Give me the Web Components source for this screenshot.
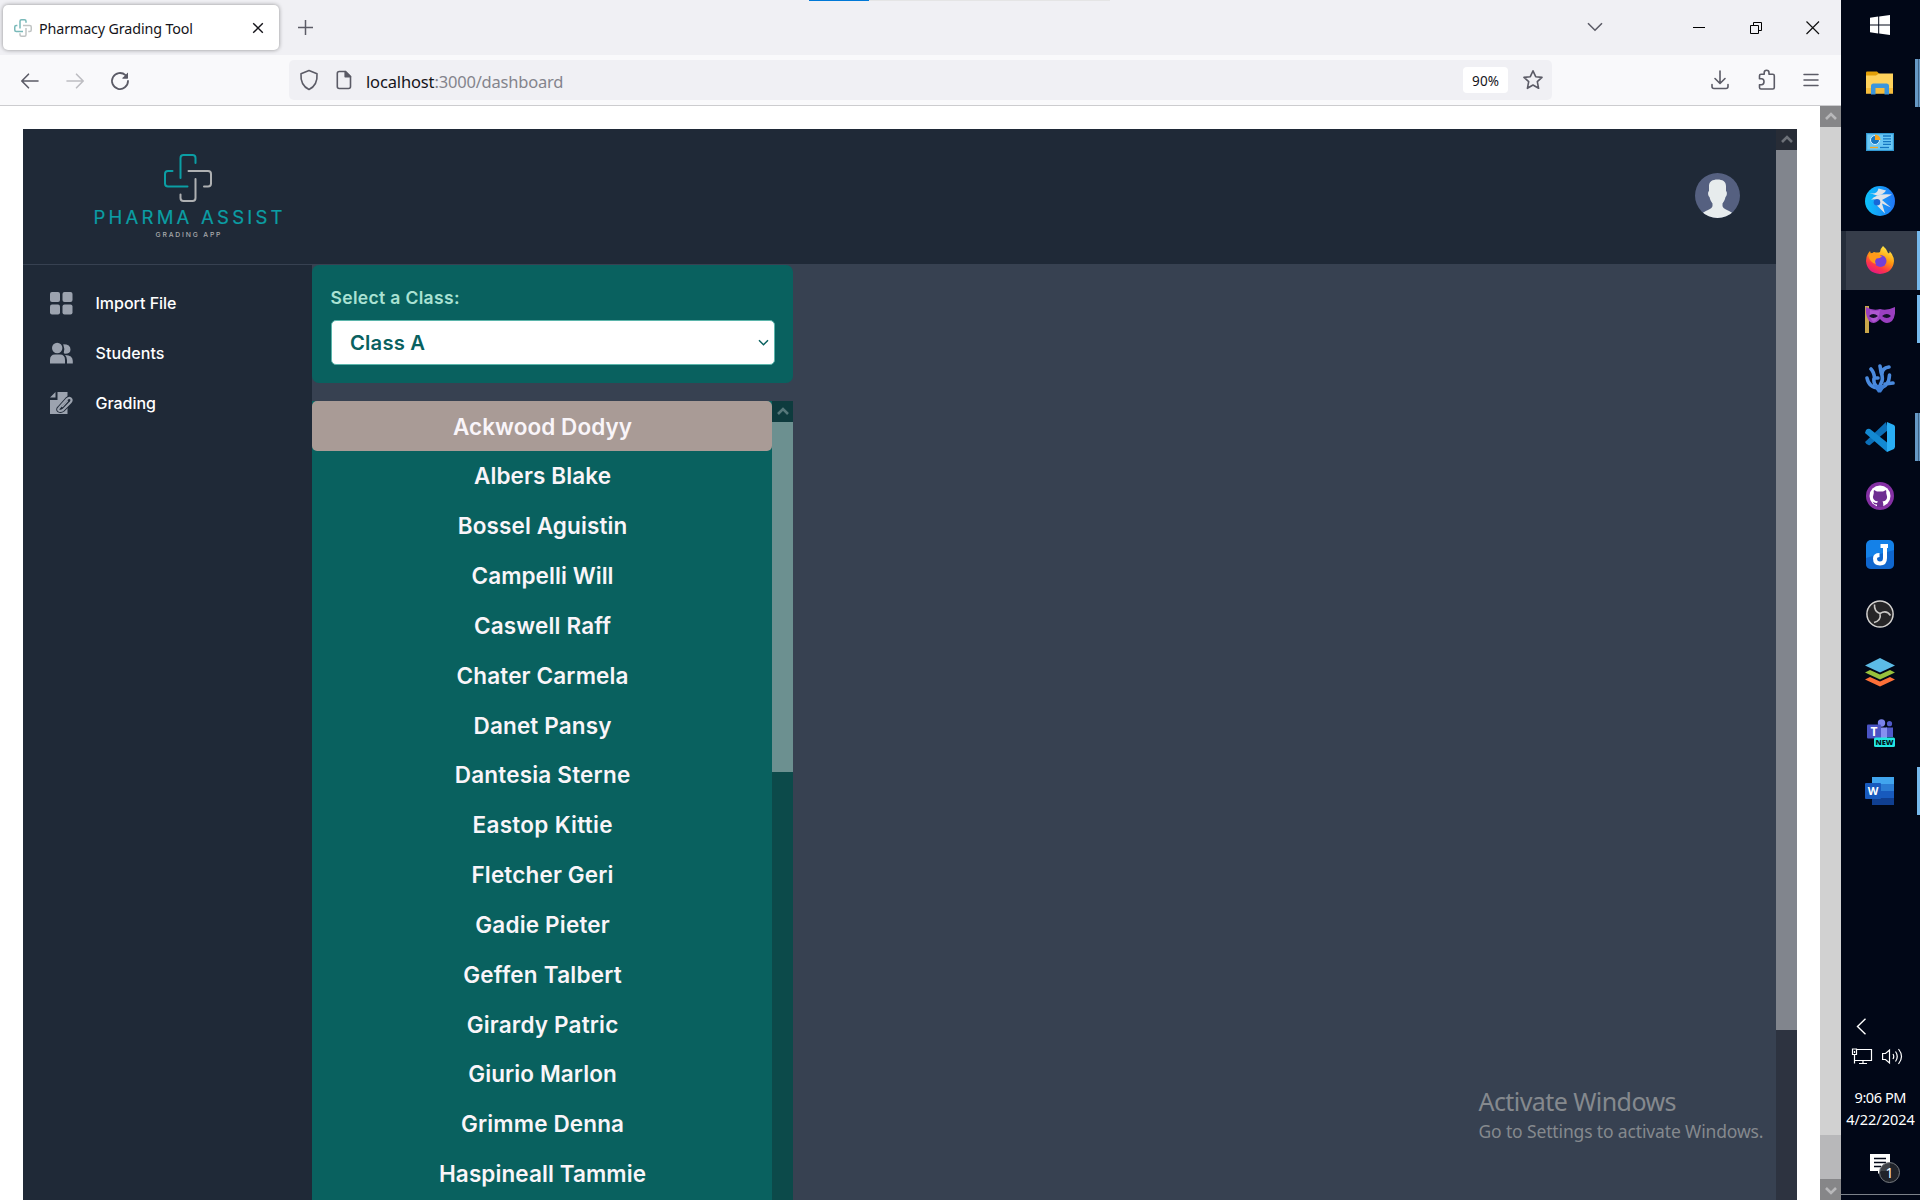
<!DOCTYPE html>
<html lang="en">
<head>
<meta charset="utf-8">
<title>Pharmacy Grading Tool</title>
<style>
html,body{margin:0;height:100%}
body{overflow:hidden;background:#fff;font-family:"Noto Sans","Open Sans",sans-serif}
</style>
</head>
<body>
<desk-screen></desk-screen>
<script>
const define = (name, html, init) => {
  const tpl = document.createElement('template');
  tpl.innerHTML = html;
  customElements.define(name, class extends HTMLElement {
    constructor() {
      super();
      this.attachShadow({ mode: 'open' }).appendChild(tpl.content.cloneNode(true));
    }
    connectedCallback() { if (init) init(this, this.shadowRoot); }
  });
};

/* A line of text whose tracking is tuned so that it spans w pixels. */
define('fit-text', `<style>
:host{display:block;white-space:nowrap}
span{display:inline-block;white-space:pre}
</style><span></span>`, (el, root) => {
  const s = root.querySelector('span');
  s.textContent = el.getAttribute('text');
  const w = parseFloat(el.getAttribute('w'));
  if (!w) return;
  const n = s.textContent.length;
  const natural = s.getBoundingClientRect().width;
  const ls = (w - natural) / (n - 1);
  s.style.letterSpacing = ls + 'px';
  s.style.marginRight = -ls + 'px';
});

/* ---------- Browser chrome ---------- */
define('browser-tabs', `<style>
:host{display:flex;height:55px;box-sizing:border-box;background:#f0f0f4;position:relative;align-items:center}
.load{position:absolute;left:809px;top:0;width:60px;height:1px;background:#0078d7}
.rest{position:absolute;left:869px;top:0;width:241px;height:1px;background:#e5e5e5}
.tab{width:276px;height:45px;margin-left:3px;background:#fff;border-radius:5px;box-shadow:0 0 4px rgba(0,0,0,.4);display:flex;align-items:center;box-sizing:border-box;padding:0 15px 0 11px}
.tab svg{flex:none}
fit-text{font-size:14.300px;color:#15141a;margin-left:7px;flex:1;line-height:20px;padding-top:2px}
.plus{margin-left:18px}
.grow{flex:1}
</style>
<div class="load"></div><div class="rest"></div>
<div class="tab">
<svg width="18" height="18" viewBox="0 0 48 48" fill="none" stroke-width="4"><path stroke="#79b9b9" d="M32 10V6Q32 2 28 2H20Q16 2 16 6V25M9 17H6Q2 17 2 21V29Q2 33 6 33H24"/><path stroke="#c0c4c4" d="M24 17H42Q46 17 46 21V29Q46 33 42 33H38M32 24V42Q32 46 28 46H20Q16 46 16 42V38"/></svg>
<fit-text text="Pharmacy Grading Tool" w="154"></fit-text>
<svg width="12" height="12" viewBox="0 0 12 12"><path d="M1.200 1.200 10.800 10.800M10.800 1.200 1.200 10.800" stroke="#15141a" stroke-width="1.400"/></svg>
</div>
<svg class="plus" width="17" height="17" viewBox="0 0 17 17"><path d="M8.500 1V16M1 8.500H16" stroke="#5b5b66" stroke-width="1.500"/></svg>
<span class="grow"></span>
<svg width="16" height="10" viewBox="0 0 16 10" style="margin:0 90px 1px 0"><path d="M1 1.200 8 8.200 15 1.200" fill="none" stroke="#5b5b66" stroke-width="1.600"/></svg>
<svg width="12" height="12" viewBox="0 0 12 12" style="margin:0 45px 0 0"><path d="M0 5.500H12" stroke="#000"/></svg>
<svg width="12" height="12" viewBox="0 0 12 12" style="margin:0 44px 0 0"><path d="M.5 3.500H8.500V11.500H.5ZM3.500 3V.5H11.500V8.500H9" fill="none" stroke="#000"/></svg>
<svg width="14" height="14" viewBox="0 0 14 14" style="margin:0 21px 0 0"><path d="M.5.5 13 13M13 .5.5 13" stroke="#111" stroke-width="1.200"/></svg>`);

define('browser-toolbar', `<style>
:host{display:flex;align-items:center;height:51px;box-sizing:border-box;background:#f9f9fb;border-bottom:1px solid #cccccf;padding-left:20px}
svg{flex:none;fill:none;stroke:#5b5b66;stroke-width:1.600;stroke-linecap:round;stroke-linejoin:round}
.url{width:1263px;height:40px;box-sizing:border-box;background:#f0f0f4;border-radius:5px;display:flex;align-items:center;margin-left:159px;padding:0 8px 0 10px}
fit-text{line-height:22px;font-size:16.500px;padding-top:3px}
.host{color:#15141a;margin-left:14px}
.path{color:#84848c;flex:1}
.zoom{width:45px;height:26px;border-radius:4px;background:#fff;display:flex;align-items:center;justify-content:center;color:#15141a;margin-right:14px}
.zoom fit-text{font-size:13.500px;padding-top:1px}
</style>
<svg width="20" height="18" viewBox="0 0 20 18" style="margin-top:1px"><path d="M18 9H2M8.500 2.200 1.800 9 8.500 15.800"/></svg>
<svg width="20" height="18" viewBox="0 0 20 18" style="margin:1px 0 0 26px;stroke:#bdbdc2"><path d="M1 9H17M10.500 2.200 17.200 9 10.500 15.800"/></svg>
<svg width="20" height="20" viewBox="0 0 20 20" style="margin:1px 0 0 24px;stroke-width:1.800"><path d="M15.500 4.200A8 8 0 1 0 18 10"/><path d="M18 1.500V7.500H12Z" fill="#5b5b66" stroke="none"/><path d="M17.500 2.800V7H13.200" stroke-width="1"/></svg>
<div class="url">
<svg width="20" height="22" viewBox="0 0 20 22"><path d="M10 1.500 18 4.700C18.500 11 17 17 10 20.500 3 17 1.500 11 2 4.700Z"/></svg>
<svg width="16" height="20" viewBox="0 0 16 20" style="margin-left:17px"><path d="M3.300 1.500H9.500L14.500 6.500V16.500Q14.500 18.500 12.500 18.500H3.300Q1.300 18.500 1.300 16.500V3.500Q1.300 1.500 3.300 1.500Z"/><path d="M9.200 1.500V6.800H14.500Z" fill="#5b5b66"/></svg>
<fit-text class="host" text="localhost" w="68.500"></fit-text>
<fit-text class="path" text=":3000/dashboard" w="129"></fit-text>
<div class="zoom"><fit-text text="90%" w="27"></fit-text></div>
<svg width="22" height="22" viewBox="0 0 22 22"><path d="M11 1.800 13.700 7.700 20 8.400 15.300 12.700 16.600 19.300 11 16 5.400 19.300 6.700 12.700 2 8.400 8.300 7.700Z"/></svg>
</div>
<svg width="18" height="20" viewBox="0 0 18 20" style="margin-left:159px"><path d="M9 1V13M4 8.500 9 13.500 14 8.500M1 14.500V16.500Q1 18.500 3 18.500H15Q17 18.500 17 16.500V14.500"/></svg>
<svg width="20" height="22" viewBox="0 0 20 22" style="margin-left:28px"><path d="M2.500 9V6.700Q2.500 5.200 4 5.200H7.200V3.800Q7.200 1.300 9.600 1.300 12 1.300 12 3.800V5.200H15.800Q17.300 5.200 17.300 6.700V18.500Q17.300 20 15.800 20H4Q2.500 20 2.500 18.500V15.800H4.500Q7 15.500 7 12.800 7 10 4.500 9.800H2.500Z"/></svg>
<svg width="16" height="14" viewBox="0 0 16 14" style="margin-left:26px;stroke-width:1.500"><path d="M1 1.500H15M1 7H15M1 12.500H15"/></svg>`);

/* Vertical overlay scrollbar. Sizes and colours come in as custom properties. */
define('scroll-bar', `<style>
:host{display:flex;flex-direction:column;width:21px;flex:none;background:var(--track)}
.b{height:21px;flex:none;background:var(--btn);display:flex;align-items:center;justify-content:center}
.b svg{fill:none;stroke:var(--arrow);stroke-width:2.600}
.thumb{height:var(--thumb-h);flex:none;background:var(--thumb)}
.grow{flex:1}
.down{display:none}
:host([down]) .down{display:flex}
</style>
<div class="b"><svg width="12" height="10" viewBox="0 0 12 10"><path d="M1 7 6 2 11 7"/></svg></div>
<div class="thumb"></div><div class="grow"></div>
<div class="b down"><svg width="12" height="10" viewBox="0 0 12 10"><path d="M1 3 6 8 11 3"/></svg></div>`);

/* ---------- Application ---------- */
define('app-logo', `<style>
:host{display:flex;flex-direction:column;align-items:center;width:190px}
.n{font:400 18.500px/18px Inter,sans-serif;color:#0b9ea4;margin-top:6px;-webkit-text-stroke:.2px #0b9ea4}
.s{font:500 6.800px/8px Inter,sans-serif;color:#a9abad;margin-top:5px}
</style>
<svg width="48" height="48" viewBox="0 0 48 48" fill="none" stroke-width="2" stroke-linecap="round"><path stroke="#0b9ea4" d="M31.500 9V4Q31.500 1 28.500 1H19.500Q16.500 1 16.500 4V24M8.500 17H4Q1 17 1 20V29.500Q1 32.500 4 32.500H23.500"/><path stroke="#aeb0b2" d="M24.500 17H44Q47 17 47 20V29.500Q47 32.500 44 32.500H40M31.500 25V44Q31.500 47 28.500 47H19.500Q16.500 47 16.500 44V40.500"/></svg>
<fit-text class="n" text="PHARMA ASSIST" w="189"></fit-text>
<fit-text class="s" text="GRADING APP" w="65"></fit-text>`);

define('user-avatar', `<style>:host{display:block;width:45px;height:45px}svg{display:block}</style>
<svg width="45" height="45" viewBox="0 0 45 45"><defs><clipPath id="c"><circle cx="22.500" cy="22.500" r="22.500"/></clipPath></defs><g clip-path="url(#c)"><path fill="#556080" d="M0 0H45V45H0Z"/><path fill="#e7eced" d="M22.500 6.500C27.500 6.500 31 8.500 31 13V18C32.500 19 32 23 30.500 24 29.800 27.500 28.500 29 27.500 30.500V33C28 36 33 37 37.500 40V45H7.500V40C12 37 17 36 17.500 33V30.500C16.500 29 15.200 27.500 14.500 24 13 23 12.500 19 14 18V13C14 8.500 17.500 6.500 22.500 6.500Z"/></g></svg>`);

define('app-header', `<style>
:host{display:flex;height:136px;box-sizing:border-box;border-bottom:1px solid #374151;background:#1f2937;align-items:flex-start;justify-content:space-between;padding:25px 36px 0 70px}
user-avatar{margin-top:19px}
</style><app-logo></app-logo><user-avatar></user-avatar>`);

define('nav-item', `<style>
:host{display:flex;align-items:center;height:50px;color:#fff;font:500 16px/24px Inter,sans-serif}
.i{width:24px;height:24px;margin-right:22.500px;display:flex}
</style><span class="i"><slot name="icon"></slot></span><slot></slot>`);

define('app-sidebar', `<style>
:host{display:flex;flex-direction:column;width:289px;flex:none;box-sizing:border-box;background:#1f2937;padding:13px 26px}
svg{fill:#9ca3af}
</style>
<nav-item><svg slot="icon" width="24" height="24" viewBox="0 0 24 24"><rect x="1" y="1" width="10" height="10" rx="2"/><rect x="13.500" y="1" width="10" height="10" rx="2"/><rect x="1" y="13.500" width="10" height="10" rx="2"/><rect x="13.500" y="13.500" width="10" height="10" rx="2"/></svg><fit-text text="Import File" w="81"></fit-text></nav-item>
<nav-item><svg slot="icon" width="24" height="24" viewBox="0 0 24 24"><circle cx="8.200" cy="7" r="5.200"/><path d="M1 22.500V19Q1 13.500 6 13.500H11Q16 13.500 16 19V22.500ZM14.200 3.300Q21.500 3.300 21.500 8.500 21.500 12.800 16 12.800 14.500 12.500 14.800 11.500 16 8 14.200 3.300ZM16 14Q23.800 14 23.800 20V22.500H18V19Q18 16 16 14Z"/></svg><fit-text text="Students" w="69"></fit-text></nav-item>
<nav-item><svg slot="icon" width="24" height="24" viewBox="0 0 24 24"><path d="M1 6.500 6.500 1V6.500ZM8.500 1H18.500V23H1V9H8.500Z"/><path d="M10 17 18 8Q20 6 21.600 7.300 23.500 9 21.600 11.200L14 19Q12 20.500 9.800 19.500 8.500 18.500 10 17Z" fill="#9ca3af" stroke="#1f2937" stroke-width="4"/><path d="M10 17 18 8Q20 6 21.600 7.300 23.500 9 21.600 11.200L14 19Q12 20.500 9.800 19.500 8.500 18.500 10 17Z" fill="#1f2937" stroke="#9ca3af" stroke-width="2.200"/><path d="M13.500 15.500 18.500 10" stroke="#9ca3af" stroke-width="1.300" stroke-linecap="round"/></svg><fit-text text="Grading" w="60.500"></fit-text></nav-item>`);

define('class-picker', `<style>
:host{display:flex;flex-direction:column;height:118px;box-sizing:border-box;border-radius:7px;background:#09615f;padding:21px 18px 0 18px}
label{font:600 17.500px/24px Inter,sans-serif;color:#a9e2d3;padding-left:.5px}
.sel{margin:10px 0 0 1px;width:444px;height:45px;box-sizing:border-box;background:#fff;border:1px solid #5bb5ab;border-radius:5px;display:flex;align-items:center;justify-content:space-between;padding:0 5px 0 18px;font:600 20.250px/28px Inter,sans-serif;color:#09615f}
</style>
<label><fit-text text="Select a Class:" w="129"></fit-text></label>
<div class="sel"><fit-text text="Class A" w="75"></fit-text><svg width="11" height="8" viewBox="0 0 11 8"><path d="M1 1.300 5.500 5.800 10 1.300" fill="none" stroke="#09615f" stroke-width="1.500"/></svg></div>`);

define('student-row', `<style>
:host{display:flex;height:49.830px;flex:none;align-items:center;justify-content:center;color:#f9f5f9;font:600 22.500px/30px Inter,sans-serif;border-radius:5px;box-sizing:border-box;padding:1.300px 0 0 1px}
:host([selected]){background:#a99b96}
</style><slot></slot>`);

define('student-list', `<style>
:host{display:flex;flex:1;min-height:0;background:#09615f;overflow:hidden}
.rows{flex:1;display:flex;flex-direction:column}
scroll-bar{--track:#0c4a4a;--btn:#0e3b3e;--arrow:#56777a;--thumb:#6c9090;--thumb-h:350px}
</style><div class="rows"></div><scroll-bar></scroll-bar>`, (el, root) => {
  const students = [['Ackwood Dodyy',179],['Albers Blake',137],['Bossel Aguistin',169.5],['Campelli Will',142],['Caswell Raff',137],['Chater Carmela',172],['Danet Pansy',138],['Dantesia Sterne',175.5],['Eastop Kittie',140],['Fletcher Geri',142],['Gadie Pieter',134.5],['Geffen Talbert',158.5],['Girardy Patric',151.5],['Giurio Marlon',148.5],['Grimme Denna',163],['Haspineall Tammie',207]];
  const rows = root.querySelector('.rows');
  students.forEach(([name, w], i) => {
    const row = document.createElement('student-row');
    if (!i) row.setAttribute('selected', '');
    row.innerHTML = '<fit-text text="' + name + '" w="' + w + '"></fit-text>';
    rows.appendChild(row);
  });
});

define('pharma-app', `<style>
:host{display:flex;flex:1;background:#374151;overflow:hidden}
.main{flex:1;display:flex;flex-direction:column;min-height:0}
.body{flex:1;display:flex;min-height:0}
.col{width:481px;display:flex;flex-direction:column;gap:18px;min-height:0}
scroll-bar{--track:#2d3340;--btn:#272c36;--arrow:#6d7178;--thumb:#81858d;--thumb-h:880px}
</style>
<div class="main"><app-header></app-header><div class="body"><app-sidebar></app-sidebar><div class="col"><class-picker></class-picker><student-list></student-list></div></div></div>
<scroll-bar></scroll-bar>`);

define('browser-window', `<style>
:host{display:flex;flex-direction:column;flex:1;min-width:0}
.view{flex:1;display:flex;min-height:0;background:#fff}
.page{flex:1;display:flex;padding:23px 23px 0 23px}
scroll-bar{--track:#b8b8ba;--btn:#868688;--arrow:#b8b8ba;--thumb:#d1d1d1;--thumb-h:1008px}
</style>
<browser-tabs></browser-tabs><browser-toolbar></browser-toolbar>
<div class="view"><div class="page"><pharma-app></pharma-app></div><scroll-bar down></scroll-bar></div>`);

/* ---------- Windows taskbar ---------- */
define('task-item', `<style>
:host{display:flex;height:59px;flex:none;align-items:center;justify-content:center;box-sizing:border-box;position:relative;padding:0 2px 2px 0}
:host([active]){background:linear-gradient(90deg,#252d3a 5px,#363d4a 5px)}
i{display:none;position:absolute;right:0;top:5px;width:3px;height:48px;background:#76b9ed}
:host([run]) i{display:block}
:host([run=many]) i{width:5px;background:linear-gradient(90deg,#6698c4 3px,#3e6285 3px,#3e6285 4px,#6698c4 4px)}
:host([active]) i{top:0;height:59px}
</style><slot></slot><i></i>`);

define('win-taskbar', `<style>
:host{display:flex;flex-direction:column;width:79px;flex:none;background:#010717;position:relative;color:#fff}
svg{display:block}
.start{height:54px;display:flex;justify-content:center;padding:15px 1px 0 0;box-sizing:border-box}
.grow{flex:1}
.tray{display:flex;flex-direction:column}
.icons{display:flex;gap:9px;padding-left:10px;margin-top:12px;height:20px}
.clock{font:14.500px/22px "Noto Sans",sans-serif;display:flex;flex-direction:column;align-items:center;margin-top:19px}
.note{height:49px;margin-top:15px;position:relative;box-sizing:border-box;padding:9px 0 0 28px}
.badge{position:absolute;left:38px;top:17px;width:21px;height:21px;box-sizing:border-box;border:1px solid #777b80;border-radius:50%;background:#24282ee0;font:14px/19px "Noto Sans",sans-serif;text-align:center}
.desk{height:1px;background:#7c818a;margin-bottom:5px}
</style>
<div class="start"><svg width="20" height="20" viewBox="0 0 20 20"><path fill="#fff" d="M0 2.700 8.200 1.500V9.400H0ZM9.200 1.400 20 0V9.400H9.200ZM0 10.400H8.200V18.500L0 17.300ZM9.200 10.400H20V20L9.200 18.600Z"/></svg></div>
<task-item run="many"><svg width="28" height="24" viewBox="0 0 28 24"><path fill="#e3a008" d="M0 1.500Q0 .5 1 .5H11L13.500 3 11 5H0Z"/><path fill="#ffd25c" d="M0 4.500H10L13 2.500H27V22.500H0Z"/><path fill="#f7bd3b" d="M0 17H27V22.500H0Z"/><path fill="#3c96dc" d="M5 23.500V15Q5 12.500 7.500 12.500H20.500Q23 12.500 23 15V23.500H18.500V17H9.500V23.500Z"/></svg></task-item>
<task-item><svg width="28" height="18" viewBox="0 0 28 18"><path fill="#6bc8f5" stroke="#3298d2" stroke-width="1.200" d="M.6.600H27.400V17.400H.6Z"/><circle cx="9" cy="7" r="4.500" fill="#1677c2" stroke="#d6f0ff"/><path fill="#f5a623" d="M9 7V1.500A5.500 5.500 0 0 1 14.500 7Z"/><path stroke="#1677c2" stroke-width="1.300" d="M17 3H25M17 5.800H25M17 8.600H25M17 11.300H25"/><path stroke="#f5a623" stroke-width="1.300" d="M4 14.500H12"/><path stroke="#1677c2" stroke-width="1.300" d="M14 14.500H23"/></svg></task-item>
<task-item><svg width="30" height="30" viewBox="0 0 30 30"><defs><linearGradient id="k"><stop stop-color="#0cc3fb"/><stop offset="1" stop-color="#2176f6"/></linearGradient></defs><circle cx="15" cy="15" r="15" fill="url(#k)"/><path fill="#dfe3e8" d="M6 14Q11 7 27 8.500L17 14 26 21.500 17 17.500 20 27.500 13 20.500Q10 18 11.500 14.500 9 12.500 6 14ZM4.500 7Q12 9 13.500 2.500L21 4.500Q19 8.500 12 9.500Z"/><circle cx="12" cy="16.300" r="3.300" fill="#1768d8"/></svg></task-item>
<task-item active run="one"><svg width="28" height="28" viewBox="0 0 28 28"><defs><linearGradient id="f" x1=".8" y1="0" x2=".3" y2="1"><stop stop-color="#fff44f"/><stop offset=".45" stop-color="#ff980e"/><stop offset=".75" stop-color="#ff3647"/><stop offset="1" stop-color="#e31587"/></linearGradient></defs><path fill="url(#f)" d="M17 0Q21 3 22 7 24 8 23.500 5 28 10 28 15 27 27 14 28 1 27 0 15 0 9 4 5L5 8 8 6Q12 7 14 6 14 3 17 0Z"/><circle cx="14.500" cy="15" r="6" fill="#7340d8"/><path fill="#ff9a1a" d="M2 9Q7 5 13 8.500L16 10.500Q14 12.500 10.500 12.500 8 15 10 18 4 17 2 9Z"/></svg></task-item>
<task-item run="one"><svg width="30" height="28" viewBox="0 0 30 28"><path fill="#c9a64a" d="M0 1H4V28H0Z"/><path fill="#9a3fc0" d="M1 2Q8 6 15 4 22 6 30 2 31 11 27 16 21 21 15 14 9 21 4 16 0 10 1 2Z"/><path fill="#c070de" d="M5 5Q12 7 15 5 14 15 9 17 4 15 5 5Z" opacity=".5"/><path fill="#14102a" d="M4 11Q8 7 13 11 8 15 4 11ZM17 11Q22 7 26 11 22 15 17 11Z"/></svg></task-item>
<task-item><svg width="30" height="30" viewBox="0 0 30 30"><g fill="none" stroke="#4a8ade" stroke-width="3.600" stroke-linecap="round" stroke-linejoin="round"><path d="M14 25Q4 25 2 15M14 25Q8 22 9 15.500M9.500 15Q9 9 6 6M10 15 13 15M14 25 17 18Q18 14 16 9L15 3M17 11Q17 5 24 4M14 25Q24 24 24.500 12M20 21 28 20"/></g><path fill="#3f7fd6" d="M8 22H21L16 29.500H13Z"/></svg></task-item>
<task-item run="many"><svg width="30" height="30" viewBox="0 0 30 30"><path fill="#0b6fb8" d="M0 20 21 0 23 8 5 23Q2 24 0 20Z"/><path fill="#1389d2" d="M1 8Q3 6 5 7L24 22 22 30 0 11Z"/><path fill="#29aef5" d="M22 0 29 3Q30 4 30 5V25L29 27 22 30Z"/></svg></task-item>
<task-item><svg width="28" height="28" viewBox="0 0 28 28"><circle cx="14" cy="14" r="14" fill="#8530a4"/><circle cx="14" cy="14" r="10.500" fill="#fff"/><path fill="#6e2d91" d="M8 8 11 9.500H17L20 8Q20.500 9.500 20.200 11 23 19 16.500 19.500 17.500 20.500 17.300 25H11V22.500Q8 23 6.500 19.500 9 21.500 11.200 20.800L12 19.500Q5 19 7.800 11 7.500 9.500 8 8Z"/></svg></task-item>
<task-item><svg width="28" height="29" viewBox="0 0 28 29"><rect width="28" height="29" rx="5" fill="#1481e8"/><path fill="#0b55bd" d="M0 18 28 10V24Q28 29 23 29H5Q0 29 0 24Z" opacity=".6"/><path fill="none" stroke="#fff" stroke-width="4" d="M14.500 6H22M19 6V18Q19 23.500 14 23.500 9 23.500 9 18.500 9 15 13.500 15"/></svg></task-item>
<task-item><svg width="28" height="28" viewBox="0 0 28 28"><circle cx="14" cy="14" r="13.100" fill="#262527" stroke="#d4d2d0" stroke-width="1.500"/><path fill="none" stroke="#c9c7c5" stroke-width="1.600" d="M8.500 4.500Q8 11.500 14 13.500 20.500 9.500 24.500 15.500M14 13.500Q15.500 20.500 8 22.500"/></svg></task-item>
<task-item><svg width="30" height="29" viewBox="0 0 30 29"><path fill="#fd7038" d="M0 21.500 5 19 15 23.500 25 19 30 21.500 15 28.500Z"/><path fill="#97c23c" d="M0 14.500 5 12 15 16.500 25 12 30 14.500 15 21.500Z"/><path fill="#5cbbe6" d="M15 0 30 7.500 15 14.500 0 7.500Z"/></svg></task-item>
<task-item><svg width="28" height="28" viewBox="0 0 28 28" style="margin:2px 0 0 3px"><circle cx="14.500" cy="4" r="3.700" fill="#7b83eb"/><circle cx="22.500" cy="4.700" r="2.600" fill="#5059c9"/><path fill="#5059c9" d="M19 8.500H26V18H19Z"/><path fill="#8790f0" d="M9 8.500H20V19H9Z"/><rect y="5.500" width="14" height="14" rx="1" fill="#4a54c5"/><text x="7" y="16.500" font-family="Open Sans" font-weight="700" font-size="12" fill="#fff" text-anchor="middle">T</text><rect x="7" y="18.500" width="21" height="9.500" rx="1.500" fill="#23e6e2"/><text x="17.500" y="26.200" font-family="Open Sans" font-weight="800" font-size="7.500" fill="#00131c" text-anchor="middle">NEW</text></svg></task-item>
<task-item run="one"><svg width="29" height="28" viewBox="0 0 29 28"><path fill="#41a5ee" d="M7 0H29V7H7Z"/><path fill="#2b7cd3" d="M7 7H29V14H7Z"/><path fill="#185abd" d="M7 14H29V21H7Z"/><path fill="#103f91" d="M7 21H29V28H7Z"/><rect y="6" width="16" height="16" rx="1" fill="#185abd"/><text x="8" y="18" font-family="Open Sans" font-weight="700" font-size="11" fill="#fff" text-anchor="middle">W</text></svg></task-item>
<span class="grow"></span>
<div class="tray">
<svg width="11" height="17" viewBox="0 0 11 17" style="margin-left:15px"><path d="M9.500.8 1.500 8.500 9.500 16.200" fill="none" stroke="#fff" stroke-width="1.400"/></svg>
<div class="icons">
<svg width="22" height="18" viewBox="0 0 22 18" fill="none" stroke="#fff" stroke-width="1.200"><path d="M5.500 2.500H20.500V13.500H3.500M12 13.500V16.500M8 16.500H16M1.500 2H5.500V7.500H1.500ZM3.500 4V6M3.500 7.500V16.500"/></svg>
<svg width="21" height="18" viewBox="0 0 21 18" fill="none" stroke="#fff" stroke-width="1.200"><path d="M.6 6.500H3.500L7.500 3V16L3.500 12.500H.6ZM11 7Q12.500 9.500 11 12M13.500 4.500Q17 9.500 13.500 14.500M16.500 2Q22.500 9.500 16.500 17"/></svg>
</div>
<div class="clock"><fit-text text="9:06 PM" w="52"></fit-text><fit-text text="4/22/2024" w="68.500"></fit-text></div>
<div class="note"><svg width="22" height="22" viewBox="0 0 22 22"><path fill="#fff" d="M1 0H21V17H12L9 20V17H1Z"/><path stroke="#010717" stroke-width="1.300" d="M5 4.500H17M5 8.500H17M5 12.500H12"/></svg><div class="badge">1</div></div>
<div class="desk"></div>
</div>`);

define('activation-note', `<style>
:host{display:block;position:absolute;left:1478.500px;top:1086px;color:#85898e}
.a{font:25px/30px "Noto Sans",sans-serif}
.b{font:17.500px/26px "Noto Sans",sans-serif;margin-top:2px}
</style><fit-text class="a" text="Activate Windows" w="198"></fit-text><fit-text class="b" text="Go to Settings to activate Windows." w="285"></fit-text>`);

define('desk-screen', `<style>:host{display:flex;width:1920px;height:1200px;overflow:hidden;position:relative}</style>
<browser-window></browser-window><win-taskbar></win-taskbar><activation-note></activation-note>`);
</script>
</body>
</html>
